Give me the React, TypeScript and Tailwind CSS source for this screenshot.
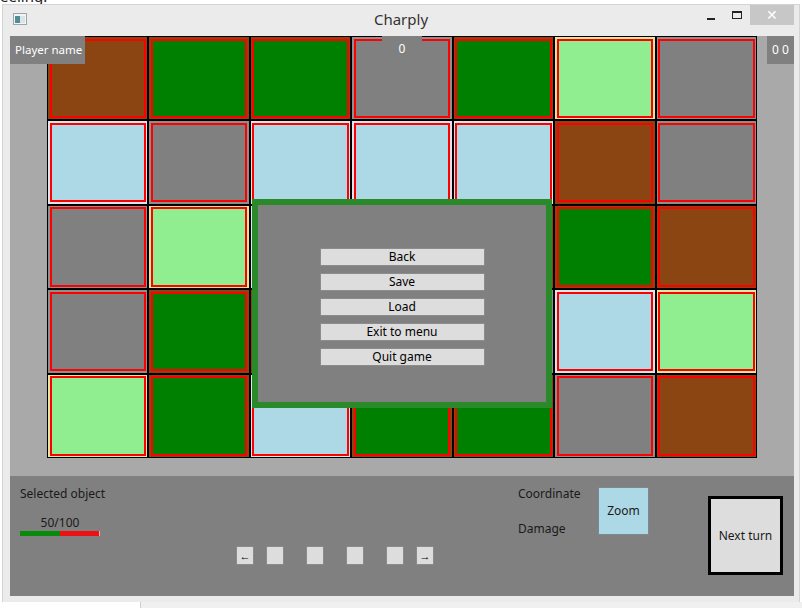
import React from 'react';

type Tile = 'B' | 'G' | 'S' | 'L' | 'C';

// fill + outer ring colour per terrain
const TILE: Record<Tile, { fill: string; ring: string }> = {
    B: { fill: 'bg-[#8b4513]', ring: 'bg-[#8b4513]' },
    G: { fill: 'bg-[#008000]', ring: 'bg-[#8b4513]' },
    S: { fill: 'bg-[#808080]', ring: 'bg-[#8e8e8e]' },
    L: { fill: 'bg-[#90ee90]', ring: 'bg-[#e6e6a0]' },
    C: { fill: 'bg-[#add8e6]', ring: 'bg-[#dde6ec]' },
};

const MAP: Tile[][] = [
    ['B', 'G', 'G', 'S', 'G', 'L', 'S'],
    ['C', 'S', 'C', 'C', 'C', 'B', 'S'],
    ['S', 'L', 'C', 'S', 'G', 'G', 'B'],
    ['S', 'G', 'B', 'C', 'S', 'C', 'L'],
    ['L', 'G', 'C', 'G', 'G', 'S', 'B'],
];

const MENU = ['Back', 'Save', 'Load', 'Exit to menu', 'Quit game'];

function Cell({ t }: { t: Tile }) {
    const c = TILE[t];
    return (
        <div className={`border border-black p-[1.5px] ${c.ring}`}>
            <div className={`h-full border-2 border-[#ff0000] ${c.fill}`} />
        </div>
    );
}

function NavBtn({ label }: { label?: string }) {
    return (
        <div className="w-[18px] h-[19px] bg-[#dddddd] border border-[#8a8a8a] flex items-center justify-center text-[11px] leading-none text-black">
            {label}
        </div>
    );
}

export default function App() {
    return (
        <div className="w-[802px] h-[608px] bg-white overflow-hidden font-['Noto_Sans','Open_Sans',sans-serif] text-[12px] text-[#1a1a1a]">
            {/* desktop text peeking above the window */}
            <div className="h-[4px] overflow-hidden">
                <div className="-mt-[13px] text-[15px] leading-[18px] text-[#222]">eeling:</div>
            </div>

            {/* window */}
            <div className="ml-[2px] w-[798px] bg-[#ebebeb] border-x border-t border-[#d4d4d4]">
                {/* title bar */}
                <div className="h-[31px] grid grid-cols-[1fr_auto_1fr]">
                    <div className="flex items-start pt-[8px] pl-[10px]">
                        <svg width="14" height="12" viewBox="0 0 14 12">
                            <rect x="0.5" y="0.5" width="13" height="11" fill="#f4f4f4" stroke="#9aa5ab" />
                            <rect x="2" y="3" width="5" height="7" fill="#4f8d94" />
                            <rect x="7" y="3" width="5" height="7" fill="#d9e4e6" />
                        </svg>
                    </div>
                    <div className="pt-[4px] text-[15px] leading-[20px] text-[#333]">Charply</div>
                    <div className="flex justify-end items-start pr-[5px]">
                        <div className="w-[26px] h-[20px] flex items-center justify-center">
                            <div className="w-[8px] h-[2px] bg-[#222] mt-[8px]" />
                        </div>
                        <div className="w-[26px] h-[20px] flex items-center justify-center">
                            <div className="w-[10px] h-[8px] border border-[#222] border-t-2" />
                        </div>
                        <div className="w-[44px] h-[20px] bg-[#c7c7c7] flex items-center justify-center text-white text-[14px] leading-none">
                            ✕
                        </div>
                    </div>
                </div>

                {/* client area */}
                <div className="ml-[7px] w-[784px]">
                    {/* game field */}
                    <div className="relative h-[440px] bg-[#a9a9a9] flex justify-center items-start">
                        <div className="grid grid-cols-7 grid-rows-5 w-[710px] h-[422px]">
                            {MAP.flat().map((t, i) => (
                                <Cell key={i} t={t} />
                            ))}
                        </div>

                        <div className="absolute left-0 top-0 h-[28px] w-[75px] bg-[#808080] text-white flex items-center pl-[5px] whitespace-nowrap text-[11.5px]">
                            Player name
                        </div>
                        <div className="absolute left-[372px] top-0 h-[28px] w-[40px] bg-[#808080] text-white flex items-start justify-center pt-[4px]">
                            0
                        </div>
                        <div className="absolute right-0 top-0 h-[28px] w-[27px] bg-[#808080] text-white flex items-center justify-center whitespace-nowrap">
                            0 0
                        </div>

                        {/* pause menu */}
                        <div className="absolute left-[242px] top-[163px] w-[300px] h-[209px] border-[6px] border-[#2a8a2a] bg-[#808080] flex flex-col items-center pt-[43px] gap-[7px]">
                            {MENU.map((m) => (
                                <div
                                    key={m}
                                    className="w-[165px] h-[18px] bg-[#dddddd] border border-[#8c8c8c] flex items-center justify-center text-black leading-none"
                                >
                                    {m}
                                </div>
                            ))}
                        </div>
                    </div>

                    {/* bottom panel */}
                    <div className="h-[120px] bg-[#808080] flex pl-[10px]">
                        <div className="w-[216px] pt-[10px]">
                            <div className="leading-[16px]">Selected object</div>
                            <div className="w-[80px] mt-[13px] text-center leading-[16px]">50/100</div>
                            <div className="w-[80px] h-[5px] flex">
                                <div className="w-[40px] bg-[#0a8a0a]" />
                                <div className="flex-1 bg-[#ee1111] border-r border-[#f4a6a6]" />
                            </div>
                        </div>

                        <div className="pt-[70px] flex">
                            <NavBtn label="←" />
                            <div className="ml-[12px]"><NavBtn /></div>
                            <div className="ml-[22px]"><NavBtn /></div>
                            <div className="ml-[22px]"><NavBtn /></div>
                            <div className="ml-[22px]"><NavBtn /></div>
                            <div className="ml-[12px]"><NavBtn label="→" /></div>
                        </div>

                        <div className="ml-[84px] w-[80px] pt-[10px]">
                            <div className="leading-[16px]">Coordinate</div>
                            <div className="leading-[16px] mt-[19px]">Damage</div>
                        </div>

                        <div className="mt-[11px] w-[51px] h-[48px] bg-[#add8e6] border border-[#7a8a90] flex items-center justify-center">
                            Zoom
                        </div>

                        <div className="ml-[59px] mt-[20px] w-[75px] h-[79px] bg-[#dddddd] border-[3px] border-black flex items-center justify-center">
                            Next turn
                        </div>
                    </div>
                </div>
                <div className="h-[6px]" />
            </div>

            {/* desktop below the window */}
            <div className="flex h-[10px]">
                <div className="w-[140px] bg-white" />
                <div className="flex-1 bg-[#f0f0f0] border-l border-[#cfcfcf]" />
            </div>
        </div>
    );
}
